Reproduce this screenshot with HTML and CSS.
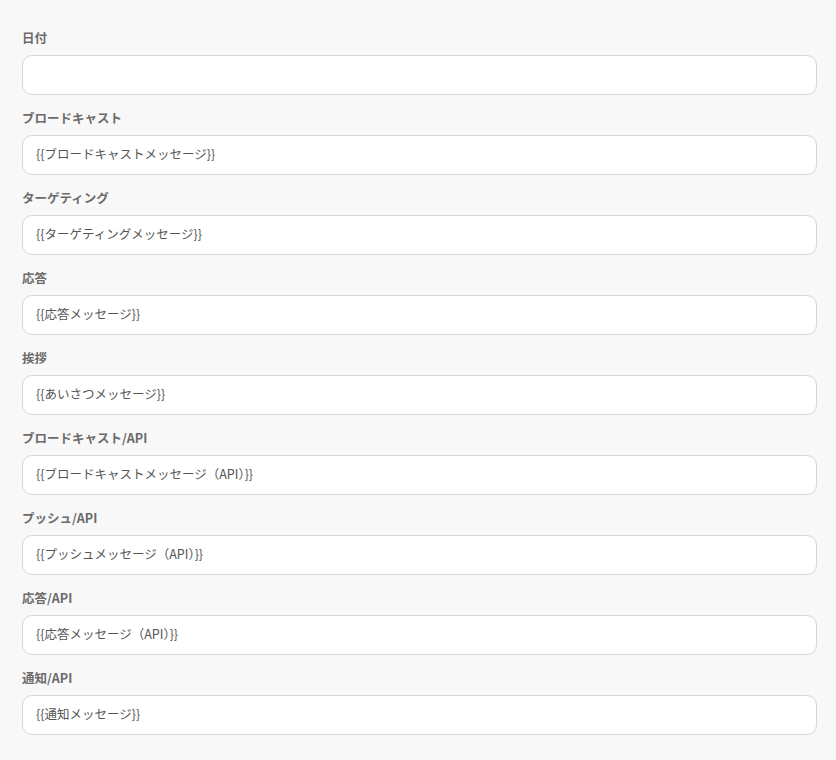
FILE: index.html
```html
<!DOCTYPE html>
<html lang="ja">
<head>
  <meta charset="UTF-8">
  <meta name="viewport" content="width=device-width, initial-scale=1.0">
  <title>メッセージ設定</title>
  <link rel="stylesheet" href="styles.css">
</head>
<body>
  <form class="settings">
    <div class="field">
      <label class="field-label">日付</label>
      <input class="field-input" type="text" value="">
    </div>
    <div class="field">
      <label class="field-label">ブロードキャスト</label>
      <input class="field-input" type="text" value="{{ブロードキャストメッセージ}}">
    </div>
    <div class="field">
      <label class="field-label">ターゲティング</label>
      <input class="field-input" type="text" value="{{ターゲティングメッセージ}}">
    </div>
    <div class="field">
      <label class="field-label">応答</label>
      <input class="field-input" type="text" value="{{応答メッセージ}}">
    </div>
    <div class="field">
      <label class="field-label">挨拶</label>
      <input class="field-input" type="text" value="{{あいさつメッセージ}}">
    </div>
    <div class="field">
      <label class="field-label">ブロードキャスト/API</label>
      <input class="field-input" type="text" value="{{ブロードキャストメッセージ（API）}}">
    </div>
    <div class="field">
      <label class="field-label">プッシュ/API</label>
      <input class="field-input" type="text" value="{{プッシュメッセージ（API）}}">
    </div>
    <div class="field">
      <label class="field-label">応答/API</label>
      <input class="field-input" type="text" value="{{応答メッセージ（API）}}">
    </div>
    <div class="field">
      <label class="field-label">通知/API</label>
      <input class="field-input" type="text" value="{{通知メッセージ}}">
    </div>
  </form>
</body>
</html>
```

FILE: styles.css
```css
body {
  margin: 0;
  background-color: #f8f8f8;
  font-family: "Noto Sans CJK JP", "Noto Sans", sans-serif;
}
.settings {
  display: flex;
  flex-direction: column;
  gap: 13px;
  padding: 28px 19px 20px 22px;
}
.field {
  display: flex;
  flex-direction: column;
  gap: 7px;
}
.field-label {
  font-size: 12.5px;
  line-height: 20px;
  font-weight: 700;
  color: #6b6b6b;
}
.field-input {
  box-sizing: border-box;
  height: 40px;
  width: 100%;
  margin: 0;
  padding: 0 13px 3px;
  border: 1px solid #d3d5dc;
  border-radius: 10px;
  background-color: #fff;
  font-family: inherit;
  font-size: 12.5px;
  color: #555;
  outline: none;
}
```
